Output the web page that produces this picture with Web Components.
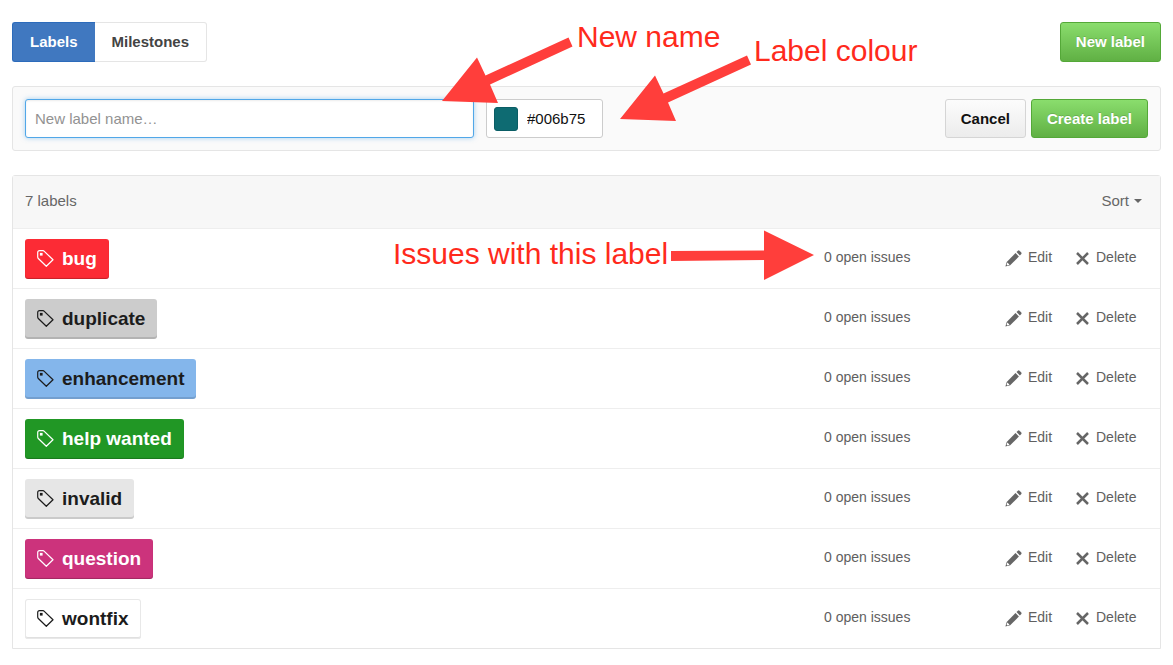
<!DOCTYPE html>
<html lang="en">
<head>
<meta charset="utf-8">
<title>Labels</title>
<style>
  body {
    margin: 0;
    background: #fff;
    color: #333;
    font: 15px/20px "Liberation Sans", Arial, sans-serif;
  }
</style>
</head>
<body>
<labels-page></labels-page>

<script>
const define = (name, html, setup) => {
  const template = document.createElement("template");
  template.innerHTML = html;
  customElements.define(name, class extends HTMLElement {
    constructor() {
      super();
      this.attachShadow({ mode: "open" }).append(template.content.cloneNode(true));
    }
    connectedCallback() {
      if (setup) setup(this, this.shadowRoot);
    }
  });
};

define("ui-button", `
  <style>
    :host { display: block; flex: none; }
    button {
      box-sizing: border-box;
      height: var(--control-height, 40px);
      padding: 0 15px;
      border: 1px solid #d5d5d5;
      border-radius: 3px;
      background: linear-gradient(#fcfcfc, #ececec);
      color: #111;
      font: bold 15px/20px "Liberation Sans", Arial, sans-serif;
      white-space: nowrap;
      display: block;
    }
    :host([primary]) button {
      border-color: #54a838;
      background: linear-gradient(#8add6d, #60b044);
      color: #fff;
      text-shadow: 0 -1px 0 rgba(0, 0, 0, .15);
    }
  </style>
  <button type="button"><slot></slot></button>`);

define("tab-nav", `
  <style>
    :host { display: block; }
    nav { display: flex; }
    a {
      box-sizing: border-box;
      height: 40px;
      padding: 9px 17px;
      border: 1px solid #e5e5e5;
      color: #444;
      font-weight: bold;
      text-decoration: none;
    }
    a:first-child { border-right: 0; border-radius: 3px 0 0 3px; }
    a:last-child { border-left: 0; border-radius: 0 3px 3px 0; }
    a[aria-current] { background: #4078c0; border-color: #2c6bbb; color: #fff; }
  </style>
  <nav aria-label="Issue sections">
    <a href="#labels" aria-current="page">Labels</a><a href="#milestones">Milestones</a>
  </nav>`);

define("label-form", `
  <style>
    :host { display: block; --control-height: 39px; }
    form {
      display: flex;
      align-items: center;
      gap: 12px;
      padding: 12px;
      border: 1px solid #e5e5e5;
      border-radius: 3px;
      background: #fafafa;
    }
    input {
      box-sizing: border-box;
      height: var(--control-height);
      margin: 0;
      border: 1px solid #ccc;
      border-radius: 3px;
      background: #fff;
      color: #111;
      font: 15px/20px "Liberation Sans", Arial, sans-serif;
      outline: none;
    }
    input[type="text"] { padding-bottom: 2px; }
    input.name {
      flex: 0 1 449px;
      min-width: 0;
      padding-left: 9px;
      border-color: #51a7e8;
      box-shadow: inset 0 1px 2px rgba(0, 0, 0, .08), 0 0 5px rgba(81, 167, 232, .5);
    }
    .name::placeholder { color: #929292; opacity: 1; }
    .colour { display: grid; align-items: center; flex: none; }
    .colour > * { grid-area: 1 / 1; }
    .colour input { width: 117px; padding-left: 40px; }
    .swatch {
      z-index: 1;
      width: 24px;
      height: 24px;
      margin-left: 8px;
      padding: 0;
      border: 1px solid #0a5d65;
      border-radius: 3px;
      background: #0e6b72;
    }
    .actions { display: flex; gap: 5px; margin-left: auto; }
  </style>
  <form>
    <input class="name" type="text" placeholder="New label name…" aria-label="Label name">
    <div class="colour">
      <input type="text" value="#006b75" aria-label="Label colour">
      <button class="swatch" type="button" aria-label="Pick a colour"></button>
    </div>
    <div class="actions">
      <ui-button>Cancel</ui-button>
      <ui-button primary>Create label</ui-button>
    </div>
  </form>`);

define("label-chip", `
  <style>
    :host { display: block; }
    a {
      box-sizing: border-box;
      display: inline-flex;
      vertical-align: top;
      align-items: center;
      gap: 8px;
      height: 40px;
      padding: 0 12px;
      border-radius: 3px;
      background: var(--chip);
      color: var(--ink, #1c1c1c);
      box-shadow: inset 0 -2px 0 rgba(0, 0, 0, .12);
      font: bold 19px/24px "Liberation Sans", Arial, sans-serif;
      text-decoration: none;
      white-space: nowrap;
    }
    :host([dark]) { --ink: #fff; }
    :host([dark]) a { box-shadow: inset 0 -1px 1px rgba(0, 0, 0, .22); }
    :host([outlined]) a { box-shadow: inset 0 0 0 1px #e8e8e8, inset 0 -2px 0 #e0e0e0; }
    svg { width: 17px; height: 17px; flex: none; }
  </style>
  <a href="#label">
    <svg viewBox="0 0 17 17" fill="none" stroke="currentColor" stroke-width="1.2" aria-hidden="true">
      <path d="M.7 2.600Q.7 .7 2.600 .7H6Q6.700 .7 7.300 1.300L16 9.800L9.300 16.300L1.300 8.500Q.7 7.900 .7 7Z" stroke-linejoin="round"/>
      <rect x="2.900" y="2.900" width="2.700" height="2.700" fill="currentColor" stroke="none"/>
    </svg>
    <slot></slot>
  </a>`);

define("label-row", `
  <style>
    :host {
      display: grid;
      grid-template-columns: minmax(0, 1fr) 181px 71px 61px;
      align-items: center;
      height: 59px;
      padding: 0 23px 0 12px;
      border-top: 1px solid #eee;
      font-size: 14px;
    }
    a { padding-bottom: 3px; color: #606060; text-decoration: none; }
    .action { display: flex; align-items: center; }
    .edit { gap: 6px; }
    .delete { gap: 7px; }
    svg { flex: none; margin-top: 3px; }
  </style>
  <slot></slot>
  <a href="#issues">0 open issues</a>
  <a class="action edit" href="#edit">
    <svg width="17" height="17" viewBox="0 0 17 17" fill="#666" aria-hidden="true">
      <path d="M10.500 3.100L13.900 6.500L5.200 15.200L.4 16.600L1.700 11.900Z"/>
      <path d="M11.500 2.100L12.900 .7Q13.700 0 14.500 .7L16.300 2.500Q17 3.300 16.300 4.100L14.900 5.500Z"/>
      <path d="M2.400 12.600L4.500 14.700L2.400 15.400L1.600 14.600Z" fill="#fff"/>
    </svg>Edit</a>
  <a class="action delete" href="#delete">
    <svg width="13" height="13" viewBox="0 0 13 13" fill="none" stroke="#666" stroke-width="2.500" aria-hidden="true">
      <path d="M1 1L12 12M12 1L1 12"/>
    </svg>Delete</a>`,
  host => host.setAttribute("role", "listitem"));

define("label-list", `
  <style>
    :host { display: block; border: 1px solid #e5e5e5; border-radius: 3px 3px 0 0; }
    header {
      box-sizing: border-box;
      display: flex;
      justify-content: space-between;
      align-items: center;
      height: 52px;
      padding: 0 18px 2px 12px;
      background: #f7f7f7;
      color: #666;
    }
    button {
      display: flex;
      align-items: center;
      gap: 5px;
      padding: 0;
      border: 0;
      background: none;
      color: #666;
      font: 15px/20px "Liberation Sans", Arial, sans-serif;
    }
    button::after { content: ""; border: 4px solid transparent; border-top-color: #666; border-bottom: 0; }
  </style>
  <header>
    <span>7 labels</span>
    <button type="button" aria-haspopup="true">Sort</button>
  </header>
  <div role="list"><slot></slot></div>`);

define("annotation-layer", `
  <style>
    :host {
      position: absolute;
      top: 0;
      left: 0;
      pointer-events: none;
      color: #ff2a1c;
      font: 30px/34px "Liberation Sans", Arial, sans-serif;
    }
    svg { display: block; }
    span { position: absolute; white-space: nowrap; }
    .name { left: 577px; top: 20px; }
    .colour { left: 754px; top: 34px; }
    .issues { left: 393px; top: 237px; }
  </style>
  <svg width="920" height="290" fill="#ff3e3b" aria-hidden="true">
    <path d="M442 101L477 57.500L485.500 75.500L568.500 37.500L572.500 46.500L490 84.500L498 103Z"/>
    <path d="M620 119L655 75.500L663.500 93.500L747 55.500L751 64.500L668 102.500L676 121Z"/>
    <path d="M671 251L764 250.500V230.500L814 255L764 280V260L671 261Z"/>
  </svg>
  <span class="name">New name</span>
  <span class="colour">Label colour</span>
  <span class="issues">Issues with this label</span>`);

define("labels-page", `
  <style>
    :host { display: block; position: relative; }
    main { display: flex; flex-direction: column; gap: 24px; padding: 22px 12px 16px; }
    .toolbar { display: flex; justify-content: space-between; }
  </style>
  <main>
    <div class="toolbar">
      <tab-nav></tab-nav>
      <ui-button primary>New label</ui-button>
    </div>
    <label-form></label-form>
    <label-list>
      <label-row><label-chip dark style="--chip:#fc2b35">bug</label-chip></label-row>
      <label-row><label-chip style="--chip:#ccc">duplicate</label-chip></label-row>
      <label-row><label-chip style="--chip:#84b6eb">enhancement</label-chip></label-row>
      <label-row><label-chip dark style="--chip:#219725">help wanted</label-chip></label-row>
      <label-row><label-chip style="--chip:#e6e6e6">invalid</label-chip></label-row>
      <label-row><label-chip dark style="--chip:#cc337c">question</label-chip></label-row>
      <label-row><label-chip outlined style="--chip:#fff">wontfix</label-chip></label-row>
    </label-list>
  </main>
  <annotation-layer></annotation-layer>`);
</script>
</body>
</html>
